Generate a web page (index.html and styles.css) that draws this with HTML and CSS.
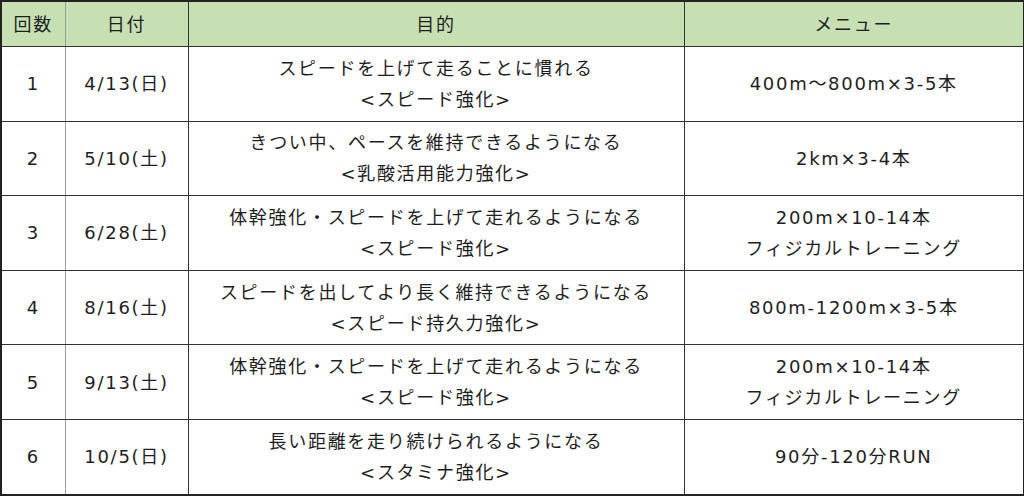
FILE: index.html
```html
<!DOCTYPE html>
<html lang="ja">
<head>
<meta charset="utf-8">
<link rel="stylesheet" href="styles.css">
</head>
<body>
<table class="plan">
  <colgroup>
    <col class="c-no">
    <col class="c-date">
    <col class="c-goal">
    <col class="c-menu">
  </colgroup>
  <thead>
    <tr class="head">
      <th class="no">回数</th>
      <th class="date">日付</th>
      <th>目的</th>
      <th>メニュー</th>
    </tr>
  </thead>
  <tbody>
    <tr>
      <td class="no">1</td>
      <td class="date">4/13(日)</td>
      <td>スピードを上げて走ることに慣れる<br>&lt;スピード強化&gt;</td>
      <td>400m～800m×3-5本</td>
    </tr>
    <tr>
      <td class="no">2</td>
      <td class="date">5/10(土)</td>
      <td>きつい中、ペースを維持できるようになる<br>&lt;乳酸活用能力強化&gt;</td>
      <td>2km×3-4本</td>
    </tr>
    <tr>
      <td class="no">3</td>
      <td class="date">6/28(土)</td>
      <td>体幹強化・スピードを上げて走れるようになる<br>&lt;スピード強化&gt;</td>
      <td>200m×10-14本<br>フィジカルトレーニング</td>
    </tr>
    <tr>
      <td class="no">4</td>
      <td class="date">8/16(土)</td>
      <td>スピードを出してより長く維持できるようになる<br>&lt;スピード持久力強化&gt;</td>
      <td>800m-1200m×3-5本</td>
    </tr>
    <tr>
      <td class="no">5</td>
      <td class="date">9/13(土)</td>
      <td>体幹強化・スピードを上げて走れるようになる<br>&lt;スピード強化&gt;</td>
      <td>200m×10-14本<br>フィジカルトレーニング</td>
    </tr>
    <tr>
      <td class="no">6</td>
      <td class="date">10/5(日)</td>
      <td>長い距離を走り続けられるようになる<br>&lt;スタミナ強化&gt;</td>
      <td>90分-120分RUN</td>
    </tr>
  </tbody>
</table>
</body>
</html>
```

FILE: styles.css
```css
html, body {
  margin: 0;
  padding: 0;
  background: #ffffff;
}

.plan {
  border-collapse: collapse;
  table-layout: fixed;
  width: 1023px;
  font-family: "DejaVu Sans", "Noto Sans CJK JP", sans-serif;
  font-size: 18px;
  letter-spacing: 1.7px;
  color: #1e1e1e;
  border: 2px solid #222222;
}

.c-no { width: 64px; }
.c-date { width: 123px; }
.c-goal { width: 496px; }
.c-menu { width: 340px; }

.plan th,
.plan td {
  text-align: center;
  vertical-align: middle;
  padding: 0;
  border: 1.5px solid #333333;
  line-height: 31px;
  font-weight: normal;
}

.plan th {
  background: #c6e0b4;
  height: 44px;
}

.plan td {
  height: 73.6px;
}

.plan .no {
  border-right: 1px solid #9a9a9a;
}

.plan .date {
  border-left: 1px solid #9a9a9a;
}
```
